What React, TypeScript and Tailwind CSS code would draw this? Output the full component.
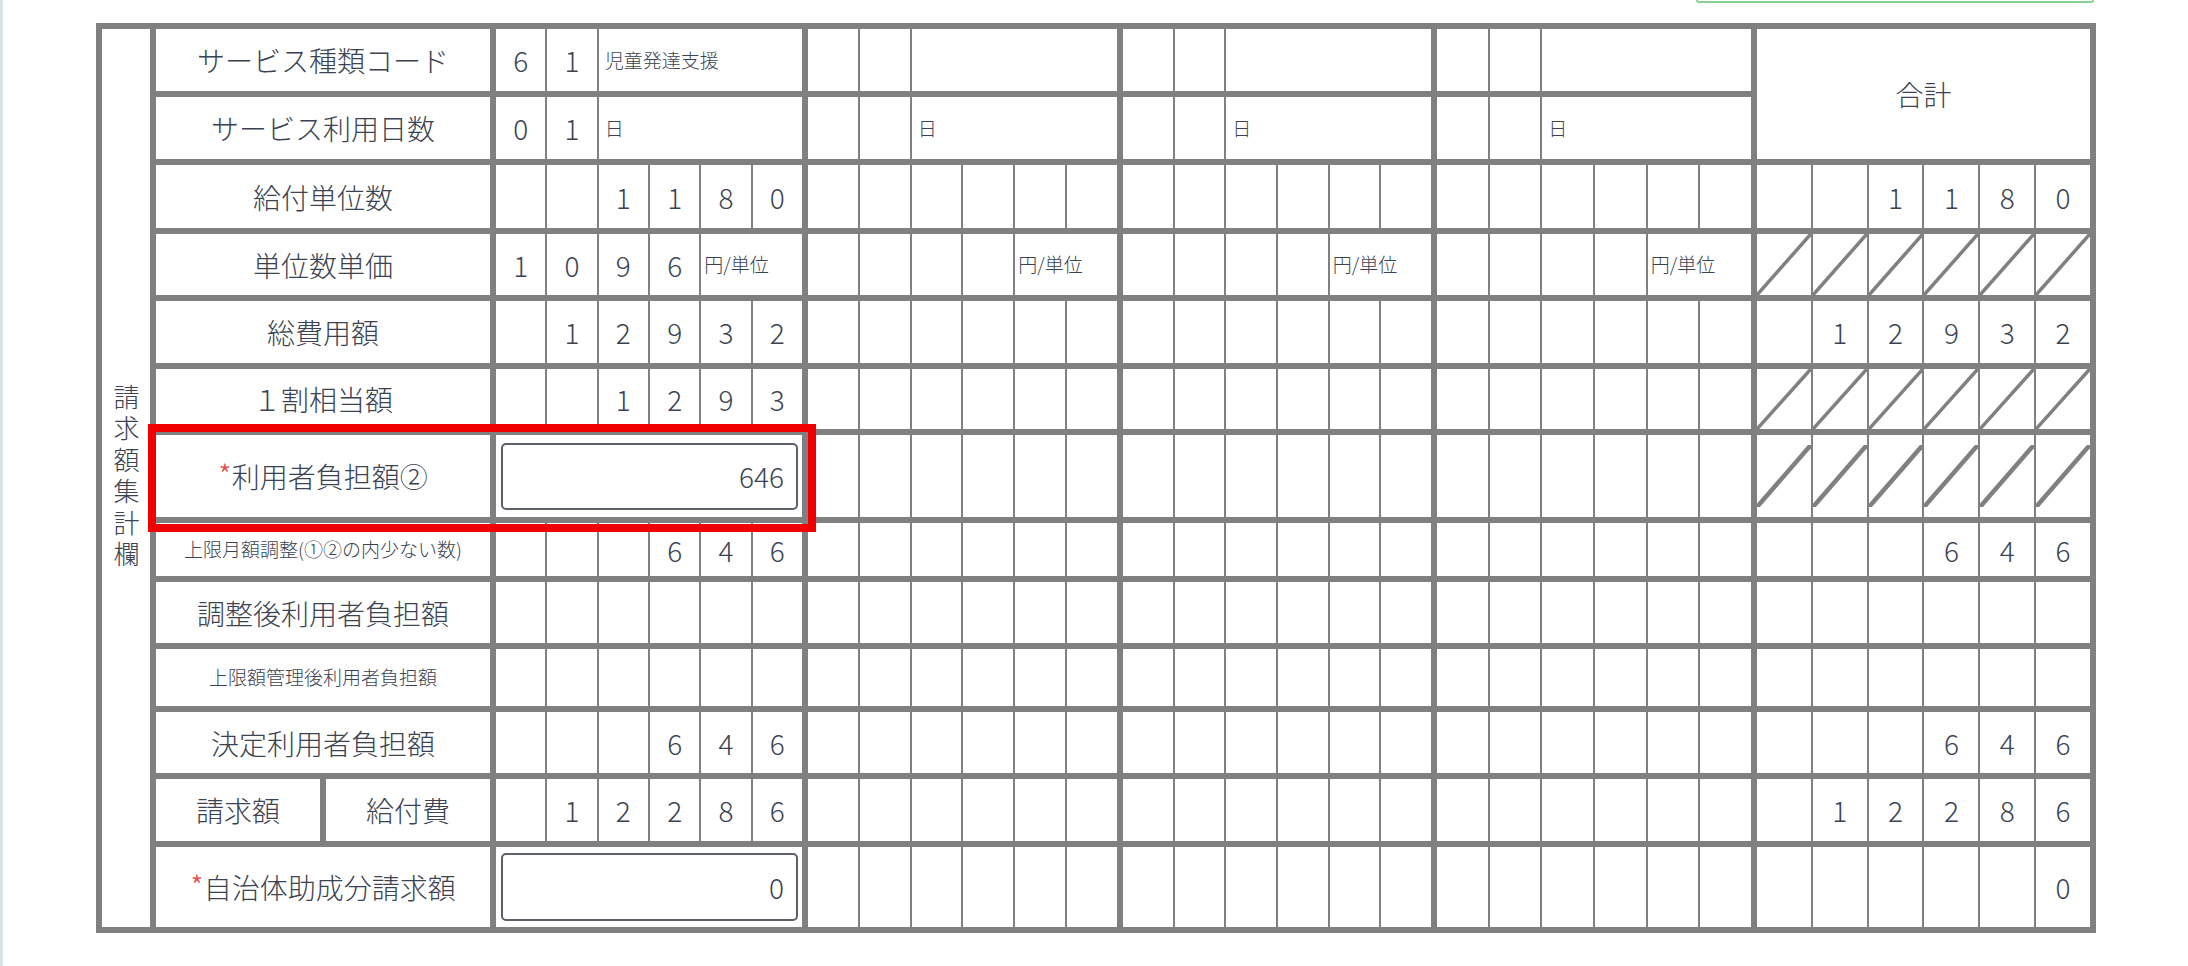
import React from "react";

const TXT = "text-[#3b4352]";

function Cell({
  children,
  className = "",
}: {
  children?: React.ReactNode;
  className?: string;
}) {
  return (
    <div className={"bg-white flex items-center justify-center " + className}>
      {children}
    </div>
  );
}

const GW = ["w-[306px]", "w-[309px]", "w-[308px]", "w-[314px]"];

function Digits({ vals, w }: { vals: string[]; w: string }) {
  return (
    <div className={"grid grid-cols-6 gap-x-[2px] " + w}>
      {vals.map((v, i) => (
        <Cell key={i} className="text-[28px]">
          {v}
        </Cell>
      ))}
    </div>
  );
}

function Empty4() {
  return (
    <>
      {GW.slice(1).map((w, i) => (
        <Digits key={i} w={w} vals={["", "", "", "", "", ""]} />
      ))}
    </>
  );
}

function DiagCell({ partial }: { partial?: boolean }) {
  return (
    <div className="bg-white flex items-center">
      <svg
        className={partial ? "w-full h-[62px]" : "w-full h-full"}
        viewBox="0 0 100 100"
        preserveAspectRatio="none"
      >
        <line
          x1="0"
          y1="100"
          x2="100"
          y2="0"
          stroke="#808080"
          strokeWidth={partial ? 4.5 : 3.5}
          vectorEffect="non-scaling-stroke"
        />
      </svg>
    </div>
  );
}

function DiagTotal({ partial }: { partial?: boolean }) {
  return (
    <div className="grid grid-cols-6 gap-x-[2px] w-[333px]">
      {[0, 1, 2, 3, 4, 5].map((i) => (
        <DiagCell key={i} partial={partial} />
      ))}
    </div>
  );
}

function Label({ children, small }: { children: React.ReactNode; small?: string }) {
  return (
    <Cell className={"w-[334px] " + (small ? small : "text-[28px]")}>{children}</Cell>
  );
}

function Wide3({
  a,
  b,
  text,
  w,
}: {
  a: string;
  b: string;
  text: string;
  w: string;
}) {
  return (
    <div className={"grid grid-cols-6 gap-x-[2px] " + w}>
      <Cell className="text-[28px]">{a}</Cell>
      <Cell className="text-[28px]">{b}</Cell>
      <div className="col-span-4 bg-white flex items-center pl-[6px] text-[19px]">
        {text}
      </div>
    </div>
  );
}

function Unit({ vals, w }: { vals: string[]; w: string }) {
  return (
    <div className={"grid grid-cols-6 gap-x-[2px] " + w}>
      {vals.map((v, i) => (
        <Cell key={i} className="text-[28px]">
          {v}
        </Cell>
      ))}
      <div className="col-span-2 bg-white flex items-center pl-[3px] text-[19px]">
        円/単位
      </div>
    </div>
  );
}

function InputGroup({ value, h }: { value: string; h: string }) {
  return (
    <div className="w-[306px] bg-white flex items-center pl-[5px] pr-[4px]">
      <input
        readOnly
        value={value}
        className={
          "w-full border-2 border-[#5c6068] rounded-[5px] text-right pr-[12px] text-[28px] outline-none bg-white " +
          TXT +
          " " +
          h
        }
      />
    </div>
  );
}

function Req() {
  return <span className="text-[#e5484d] text-[30px] leading-none relative top-[-2px]">*</span>;
}

export default function App() {
  const e6 = ["", "", "", "", "", ""];
  return (
    <div
      className={
        "w-[2188px] h-[966px] bg-white border-l-[3px] border-[#dde2e9] overflow-hidden font-['Noto_Sans_CJK_JP','Noto_Sans',sans-serif] font-light " +
        TXT
      }
    >
      <div className="ml-[1693px] w-[398px] h-[3px] border-x-2 border-b-2 border-[#86d391] rounded-b-[6px]" />
      <div className="relative ml-[93px] mt-[20px] w-[2000px] bg-[#808080] p-[6px] flex gap-[6px]">
        {/* vertical label */}
        <div className="w-[48px] bg-white flex items-center justify-center">
          <span className="[writing-mode:vertical-rl] text-[26px] leading-[26px] tracking-[5.5px]">
            請求額集計欄
          </span>
        </div>

        <div className="flex flex-col gap-[6px]">
          {/* rows 1-2 with 合計 */}
          <div className="flex gap-[6px]">
            <div className="flex flex-col gap-[6px]">
              <div className="flex gap-[6px] h-[62px]">
                <Label>サービス種類コード</Label>
                <Wide3 a="6" b="1" text="児童発達支援" w={GW[0]} />
                <Wide3 a="" b="" text="" w={GW[1]} />
                <Wide3 a="" b="" text="" w={GW[2]} />
                <Wide3 a="" b="" text="" w={GW[3]} />
              </div>
              <div className="flex gap-[6px] h-[62px]">
                <Label>サービス利用日数</Label>
                <Wide3 a="0" b="1" text="日" w={GW[0]} />
                <Wide3 a="" b="" text="日" w={GW[1]} />
                <Wide3 a="" b="" text="日" w={GW[2]} />
                <Wide3 a="" b="" text="日" w={GW[3]} />
              </div>
            </div>
            <Cell className="w-[333px] text-[28px]">合計</Cell>
          </div>

          {/* row 3 */}
          <div className="flex gap-[6px] h-[63px]">
            <Label>給付単位数</Label>
            <Digits w={GW[0]} vals={["", "", "1", "1", "8", "0"]} />
            <Empty4 />
            <Digits w="w-[333px]" vals={["", "", "1", "1", "8", "0"]} />
          </div>

          {/* row 4 */}
          <div className="flex gap-[6px] h-[61px]">
            <Label>単位数単価</Label>
            <Unit w={GW[0]} vals={["1", "0", "9", "6"]} />
            <Unit w={GW[1]} vals={["", "", "", ""]} />
            <Unit w={GW[2]} vals={["", "", "", ""]} />
            <Unit w={GW[3]} vals={["", "", "", ""]} />
            <DiagTotal />
          </div>

          {/* row 5 */}
          <div className="flex gap-[6px] h-[62px]">
            <Label>総費用額</Label>
            <Digits w={GW[0]} vals={["", "1", "2", "9", "3", "2"]} />
            <Empty4 />
            <Digits w="w-[333px]" vals={["", "1", "2", "9", "3", "2"]} />
          </div>

          {/* row 6 */}
          <div className="flex gap-[6px] h-[60px]">
            <Label>１割相当額</Label>
            <Digits w={GW[0]} vals={["", "", "1", "2", "9", "3"]} />
            <Empty4 />
            <DiagTotal />
          </div>

          {/* row 7 */}
          <div className="flex gap-[6px] h-[82px]">
            <Label>
              <Req />
              利用者負担額②
            </Label>
            <InputGroup value="646" h="h-[67px]" />
            <Empty4 />
            <DiagTotal partial />
          </div>

          {/* row 8 */}
          <div className="flex gap-[6px] h-[53px]">
            <Label small="text-[19px]">上限月額調整(①②の内少ない数)</Label>
            <Digits w={GW[0]} vals={["", "", "", "6", "4", "6"]} />
            <Empty4 />
            <Digits w="w-[333px]" vals={["", "", "", "6", "4", "6"]} />
          </div>

          {/* row 9 */}
          <div className="flex gap-[6px] h-[61px]">
            <Label>調整後利用者負担額</Label>
            <Digits w={GW[0]} vals={e6} />
            <Empty4 />
            <Digits w="w-[333px]" vals={e6} />
          </div>

          {/* row 10 */}
          <div className="flex gap-[6px] h-[57px]">
            <Label small="text-[19px]">上限額管理後利用者負担額</Label>
            <Digits w={GW[0]} vals={e6} />
            <Empty4 />
            <Digits w="w-[333px]" vals={e6} />
          </div>

          {/* row 11 */}
          <div className="flex gap-[6px] h-[61px]">
            <Label>決定利用者負担額</Label>
            <Digits w={GW[0]} vals={["", "", "", "6", "4", "6"]} />
            <Empty4 />
            <Digits w="w-[333px]" vals={["", "", "", "6", "4", "6"]} />
          </div>

          {/* row 12 */}
          <div className="flex gap-[6px] h-[62px]">
            <div className="w-[334px] flex gap-[6px]">
              <Cell className="flex-1 text-[28px]">請求額</Cell>
              <Cell className="flex-1 text-[28px]">給付費</Cell>
            </div>
            <Digits w={GW[0]} vals={["", "1", "2", "2", "8", "6"]} />
            <Empty4 />
            <Digits w="w-[333px]" vals={["", "1", "2", "2", "8", "6"]} />
          </div>

          {/* row 13 */}
          <div className="flex gap-[6px] h-[80px]">
            <Label>
              <Req />
              自治体助成分請求額
            </Label>
            <InputGroup value="0" h="h-[68px]" />
            <Empty4 />
            <Digits w="w-[333px]" vals={["", "", "", "", "", "0"]} />
          </div>
        </div>

        {/* red highlight overlay */}
        <div className="absolute left-[52px] top-[401px] w-[668px] h-[108px] border-[8px] border-[#f00000] pointer-events-none" />
      </div>
    </div>
  );
}
